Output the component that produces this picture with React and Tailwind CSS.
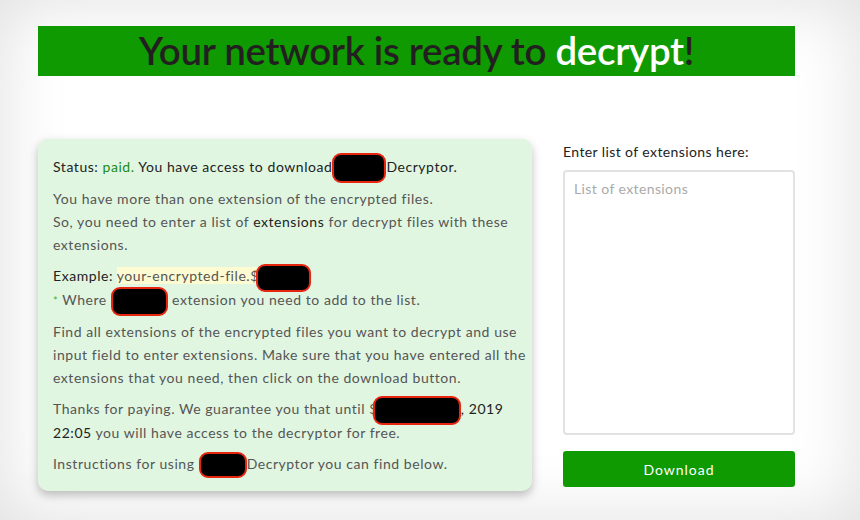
import React from 'react';

const Redacted = ({ w, h = 28, className = '' }) => (
  <span
    className={`inline-block align-middle bg-black border-2 border-[#e8250f] rounded-[9px] ${className}`}
    style={{ width: w, height: h }}
  />
);

export default function App() {
  return (
    <div className="w-[860px] h-[520px] bg-white shadow-[inset_0_0_70px_rgba(0,0,0,0.13)] overflow-hidden font-['Lato',sans-serif]">
      {/* Banner */}
      <div className="pt-[26px] pl-[38px] pr-[65px]">
        <div className="h-[50px] bg-[#0e9a00] flex items-center justify-center">
          <h1 className="text-[38.5px] font-semibold leading-none text-[#231f20] tracking-[-0.3px] pb-[2px]">
            Your network is ready to <span className="text-white">decrypt</span>!
          </h1>
        </div>
      </div>

      <div className="flex gap-[31px] pl-[38px] pr-[65px] mt-[63px]">
        {/* Info card */}
        <div className="w-[494px] h-[352px] shrink-0 bg-[#e1f6e1] rounded-[10px] shadow-[0_4px_10px_rgba(0,0,0,0.25)] px-[15px] pt-[16px] text-[14px] leading-[23px] tracking-[0.55px] whitespace-nowrap text-[#555]">
          <p className="text-[#222]">
            Status: <span className="text-[#1b8a12]">paid.</span> You have access to download<Redacted w={54} h={30} className="-my-[4px]" />Decryptor.
          </p>
          <p className="mt-[8px]">
            You have more than one extension of the encrypted files.<br />
            So, you need to enter a list of <span className="text-[#222]">extensions</span> for decrypt files with these<br />
            extensions.
          </p>
          <p className="mt-[8px]">
            <span className="text-[#222]">Example: </span>
            <span className="bg-[#fdfbd2]">your-encrypted-file.$</span><Redacted w={55} h={28} className="-my-[4px] -ml-[3px]" />
            <br />
            <span className="text-[#3cb43c] text-[11px]">*</span> Where <Redacted w={57} h={29} className="-my-[4px]" /> extension you need to add to the list.
          </p>
          <p className="mt-[8px]">
            Find all extensions of the encrypted files you want to decrypt and use<br />
            input field to enter extensions. Make sure that you have entered all the<br />
            extensions that you need, then click on the download button.
          </p>
          <p className="mt-[8px]">
            Thanks for paying. We guarantee you that until $<Redacted w={88} h={29} className="-my-[4px] -ml-[5px]" /><span className="text-[#222]">, 2019</span><br />
            <span className="text-[#222]">22:05</span> you will have access to the decryptor for free.
          </p>
          <p className="mt-[8px]">
            Instructions for using <Redacted w={48} h={26} className="-my-[4px]" />Decryptor you can find below.
          </p>
        </div>

        {/* Extensions form */}
        <div className="w-[232px] pt-[3px]">
          <label className="block text-[14px] leading-[20px] tracking-[0.4px] text-[#222]">Enter list of extensions here:</label>
          <textarea
            placeholder="List of extensions"
            className="mt-[8px] block w-full h-[265px] resize-none border-2 border-[#e2e2e2] rounded-[4px] bg-white px-[9px] py-[6px] text-[14px] tracking-[0.4px] text-[#333] placeholder:text-[#aaa] outline-none"
          />
          <button className="mt-[16px] w-full h-[36px] bg-[#0f9a02] rounded-[3px] text-white text-[14px] tracking-[1px]">
            Download
          </button>
        </div>
      </div>
    </div>
  );
}
